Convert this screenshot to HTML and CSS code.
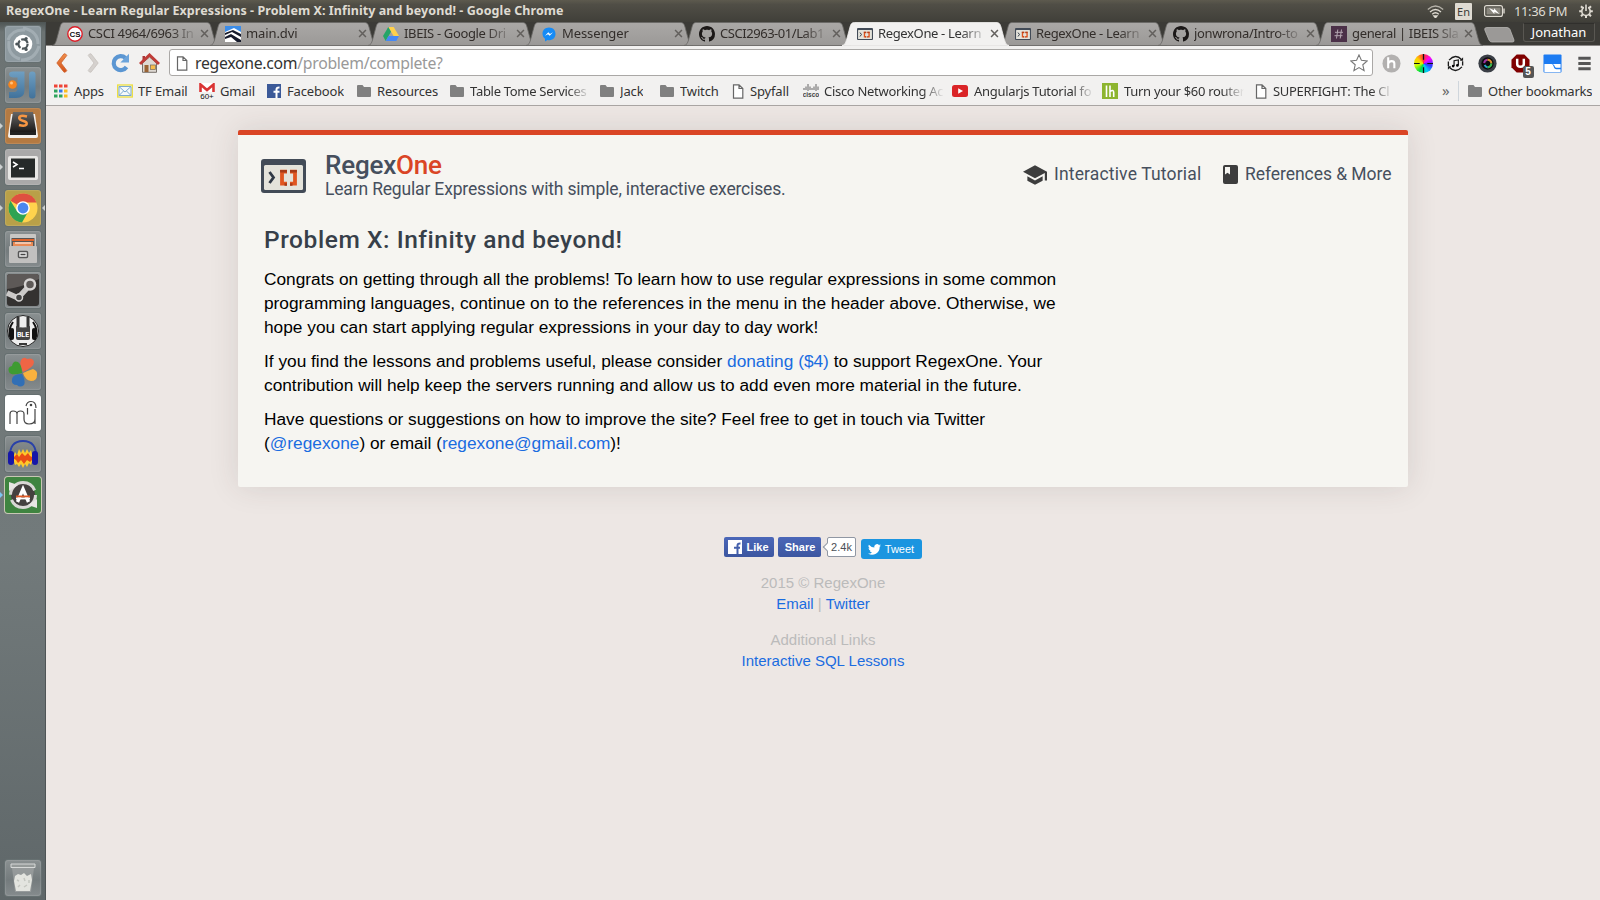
FILE: index.html
```html
<!DOCTYPE html>
<html lang="en">
<head>
<meta charset="utf-8">
<title>RegexOne - Learn Regular Expressions - Problem X: Infinity and beyond!</title>
<link rel="stylesheet" href="styles.css">
</head>
<body>
<svg class="defs" width="0" height="0">
  <defs>
    <linearGradient id="tabg" x1="0" y1="0" x2="0" y2="1"><stop offset="0" stop-color="#aaa8a6"/><stop offset="1" stop-color="#9b9997"/></linearGradient>
    <linearGradient id="orange" x1="0" y1="0" x2="0" y2="1"><stop offset="0" stop-color="#f0904c"/><stop offset="1" stop-color="#d2521a"/></linearGradient>
    <linearGradient id="dark" x1="0" y1="0" x2="0" y2="1"><stop offset="0" stop-color="#666"/><stop offset="1" stop-color="#1c1a19"/></linearGradient>
    <linearGradient id="blue" x1="0" y1="0" x2="0" y2="1"><stop offset="0" stop-color="#6f9fc2"/><stop offset="1" stop-color="#41729b"/></linearGradient>
  </defs>
  <symbol id="tabshape" viewBox="0 0 167 24"><path d="M0 23.5C3 23 3.500 21 4.500 18L8 5C9 1.500 10 .5 12.500 .5H154C157 .5 158 1.500 159 5L162.500 18C163.500 21 164 23 167 23.500Z"/></symbol>
  <symbol id="x" viewBox="0 0 10 10"><path d="M1.200 1.200L8.800 8.800M8.800 1.200L1.200 8.800" stroke="currentColor" stroke-width="1.700"/></symbol>
  <symbol id="folder" viewBox="0 0 14 13"><path d="M0 1.500Q0 .5 1 .5H5.500L7 2.500H13Q14 2.500 14 3.500V11.500Q14 12.500 13 12.500H1Q0 12.500 0 11.500Z" fill="#808080"/></symbol>
  <symbol id="page" viewBox="0 0 12 15"><path d="M1.500 .8H7L10.800 4.500V14.200H1.500ZM7 .8V4.500H10.800" fill="#fff" stroke="#666" stroke-width="1.200"/></symbol>
  <symbol id="github" viewBox="0 0 16 16"><path fill="#1b1817" d="M8 0C3.580 0 0 3.580 0 8c0 3.540 2.290 6.530 5.470 7.590.4.070.55-.17.55-.38 0-.19-.01-.82-.01-1.490-2.010.37-2.530-.49-2.690-.94-.09-.23-.48-.94-.82-1.130-.28-.15-.68-.52-.01-.53.63-.01 1.080.58 1.230.82.72 1.210 1.870.87 2.330.66.07-.52.28-.87.51-1.070-1.780-.2-3.640-.89-3.640-3.950 0-.87.31-1.590.82-2.150-.08-.2-.36-1.020.08-2.120 0 0 .67-.21 2.200.82.640-.18 1.320-.27 2-.27s1.360.09 2 .27c1.530-1.040 2.200-.82 2.200-.82.44 1.100.16 1.920.08 2.120.51.56.82 1.270.82 2.150 0 3.070-1.870 3.750-3.650 3.950.29.25.54.73.54 1.480 0 1.070-.01 1.930-.01 2.200 0 .21.15.46.55.38A8.010 8.010 0 0 0 16 8c0-4.420-3.580-8-8-8"/></symbol>
  <symbol id="rx" viewBox="0 0 45 34"><rect width="45" height="34" rx="3" fill="#424b57"/><rect x="3" y="6" width="39" height="25" rx="1.500" fill="#e4e3db"/><path d="M8.500 13L12.500 18.500L8.500 24" fill="none" stroke="#2f3845" stroke-width="2.800"/><path d="M26 12.700H21V24.700H26M29 12.700H34V24.700H29" fill="none" stroke="#e0551f" stroke-width="3.800"/><path d="M19.100 12.200H26M29 12.200H35.900M23.500 25.500H26M29 25.500H31.500" stroke="#a63a17" stroke-width="2.600"/></symbol>
</svg>

<header class="panel">
  <span class="panel-title">RegexOne - Learn Regular Expressions - Problem X: Infinity and beyond! - Google Chrome</span>
  <div class="indicators">
    <svg class="wifi" width="17" height="13" viewBox="0 0 17 13" fill="none" stroke="#dfdbd2" stroke-width="1.300"><path d="M.8 4.500Q8.500-2.500 16.200 4.500" opacity=".7"/><path d="M3 7Q8.500 2 14 7M5.200 9.300Q8.500 6.300 11.800 9.300"/><path d="M7 11L8.500 12.800L10 11Z" fill="#dfdbd2"/></svg>
    <span class="lang">En</span>
    <svg class="battery" width="21" height="12" viewBox="0 0 21 12"><rect x=".6" y=".6" width="17.800" height="10.800" rx="2" fill="none" stroke="#dfdbd2" stroke-width="1.200"/><rect x="2.500" y="2.500" width="14" height="7" fill="#8a877e"/><path d="M5 3L10 5.200L10 3.200L15.500 9L10.500 7L10.300 9Z" fill="#fff"/><path d="M20 3.500V8.500" stroke="#dfdbd2" stroke-width="1.400"/></svg>
    <span class="clock">11:36 PM</span>
    <svg class="gear" width="14" height="14" viewBox="0 0 14 14" fill="none" stroke="#dfdbd2"><circle cx="7" cy="7.300" r="4.200" stroke-width="1.600"/><path d="M11.200 7.300H13.800M.2 7.300H2.800M7 11.500V14M10 4.300l2-2M4 4.300L2 2.300M10 10.300l2 2M4 10.300L2 12.300" stroke-width="2"/><path d="M7 0V6.500" stroke="#484640" stroke-width="4"/><path d="M7 .5V7" stroke-width="1.600"/></svg>
  </div>
</header>

<div class="desktop">
  <nav class="launcher">
    <div class="tile dash"><svg viewBox="0 0 36 36"><path d="M18 2Q33 5 33 18M34 20Q30 34 16 34M3 14Q7 3 20 4M15 33Q2 29 4 15" fill="none" stroke="#b5bdc2" stroke-width="3" opacity=".55"/><circle cx="18" cy="18" r="9.300" fill="#fff"/><circle cx="18" cy="18" r="4.600" fill="none" stroke="#4d565a" stroke-width="2.200" stroke-dasharray="8.200 1.430"/><circle cx="11.800" cy="18" r="1.600" fill="#4d565a"/><circle cx="21.100" cy="12.600" r="1.600" fill="#4d565a"/><circle cx="21.100" cy="23.400" r="1.600" fill="#4d565a"/></svg></div>
    <div class="tile"><svg viewBox="0 0 36 36"><path d="M8 4.500H19.500V23Q19.500 31 11 31H4V25H9Q12.500 25 12.500 21V10.500H8Q4 10 4 7Q4 4.500 8 4.500Z" fill="url(#blue)"/><rect x="24" y="4.500" width="6.500" height="27" rx="3" fill="url(#blue)"/><circle cx="7.500" cy="17.500" r="4.300" fill="#f5851f"/><circle cx="6.500" cy="16" r="1.500" fill="#ffc27d"/></svg></div>
    <div class="tile sublime running"><svg viewBox="0 0 36 36"><path d="M6 6H30L33 28Q33 30 31 30H5Q3 30 3 28Z" fill="#f3f0ed"/><path d="M5 22H31V27H5Z" fill="#222"/><path d="M8 4H28L31 22Q31 24 28 24H8Q5 24 5 22Z" fill="url(#dark)"/><path d="M22 8.500Q14 6.500 14.300 10.300Q14.800 12.300 18.500 13Q22.500 14 21.500 16.500Q20 18.700 14 17" stroke="#f79643" stroke-width="2.600" fill="none"/></svg></div>
    <div class="tile term running"><svg viewBox="0 0 36 36"><rect x="3" y="7" width="30" height="24" rx="2" fill="#e8e7e5"/><rect x="6" y="9.500" width="24" height="19" fill="#262a29"/><path d="M8 13l4 2.500-4 2.500" fill="none" stroke="#fff" stroke-width="1.500"/><path d="M14 19.500h5" stroke="#fff" stroke-width="1.500"/></svg></div>
    <div class="tile chrome running focused"><svg viewBox="0 0 36 36"><circle cx="18" cy="18" r="14.500" fill="#ffd34d"/><path d="M18 18L5.450 10.750A14.500 14.500 0 0 1 31.500 12.500H18Z" fill="#df5040"/><path d="M5.450 10.750A14.500 14.500 0 0 0 17 32.450L23.500 21L12.500 22Z" fill="#2ea352"/><circle cx="18" cy="18" r="6.800" fill="#fff"/><circle cx="18" cy="18" r="5.400" fill="#4a87ee"/></svg></div>
    <div class="tile"><svg viewBox="0 0 36 36"><path d="M5 4Q5 3 6 3H30Q31 3 31 4V16H5Z" fill="#c8c7c4"/><rect x="6.500" y="7" width="23" height="10" fill="#555"/><rect x="7" y="8" width="22" height="2" fill="#df6229"/><rect x="8" y="11" width="20" height="4" fill="#e98a55"/><path d="M10 12H26" stroke="#fff" stroke-width="1"/><rect x="4" y="15" width="28" height="17" rx="1" fill="#c1c0bf"/><rect x="13.500" y="20.500" width="9" height="6" rx="1" fill="#eee" stroke="#555" stroke-width="1.500"/><path d="M15.500 23.500h5" stroke="#444" stroke-width="1.500"/></svg></div>
    <div class="tile"><svg viewBox="0 0 36 36"><rect x="2" y="2" width="32" height="32" rx="3" fill="#343231"/><path d="M2 17Q18 15 34 7V5Q34 2 31 2H5Q2 2 2 5Z" fill="#5d5957"/><path d="M2 21L13 26L24 14" stroke="#cbc9c8" stroke-width="5.500" fill="none"/><circle cx="25" cy="12.500" r="5" fill="#5d5957" stroke="#d6d4d3" stroke-width="2.500"/><circle cx="14" cy="25.500" r="3.500" fill="#444" stroke="#d6d4d3" stroke-width="1.500"/></svg></div>
    <div class="tile"><svg viewBox="0 0 36 36"><circle cx="18" cy="18" r="15.500" fill="#eee" stroke="#252525" stroke-width="1"/><path d="M6 27Q2 17 8 9M30 27Q34 17 28 9" stroke="#111" stroke-width="2" fill="none"/><rect x="5" y="15" width="4" height="12" rx="2" fill="#111"/><rect x="27" y="15" width="4" height="12" rx="2" fill="#111"/><path d="M13 4V14M23 4V14" stroke="#333" stroke-width="3"/><path d="M11 13Q18 16 25 13V25Q25 27 23 27H13Q11 27 11 25Z" fill="#444"/><text x="18" y="23.500" text-anchor="middle" class="ble">BLE</text><path d="M14 31H22" stroke="#222" stroke-width="1.800"/></svg></div>
    <div class="tile"><svg viewBox="0 0 36 36"><path d="M18 18Q14 11 16 6Q19 2 22 5Q28 3 29 8Q29 13 18 18Z" fill="#ef6545"/><path d="M17 19Q6 22 4 18Q2 13 7 12Q8 6 13 8Q17 11 17 19Z" fill="#3e9b32"/><path d="M18 19Q22 17 28 15Q33 17 32 21Q32 27 26 27Q20 26 18 19Z" fill="#f9b13e"/><path d="M17 20Q21 27 19 31Q15 34 12 31Q6 31 7 25Q8 20 17 20Z" fill="#316fb5"/></svg></div>
    <div class="tile mu"><svg viewBox="0 0 36 36" fill="none" stroke="#444" stroke-width="1.200"><path d="M5 29V19Q5 16 8 16Q12 16 12 19V29M12 19Q12 16 15.500 16Q19 16 19 19V24Q19 29 24 29Q30 29 30 24V14M22.500 13V19.500M30 19V29"/><path d="M21 11Q22 6.500 26 6.500Q31 6.500 31 13"/><circle cx="26" cy="10" r=".7" fill="#444"/></svg></div>
    <div class="tile"><svg viewBox="0 0 36 36"><path d="M5 22Q4 5 18 5Q32 5 31 22" stroke="#2941a8" stroke-width="2" fill="none"/><path d="M8 22L10 16L12 19L14 13L16 17L18 13L20 17L22 13L24 17L26 14L28 22L26 29L24 27L22 31L20 28L18 32L16 28L14 31L12 28L10 29Z" fill="#ffc92b"/><path d="M8 22L12 18L14 21L17 17L20 20L23 17L25 20L29 22L25 26L22 24L19 28L16 24L13 27L11 24Z" fill="#e94c16"/><rect x="3" y="15" width="6" height="14" rx="3" fill="#1717a8"/><rect x="27" y="15" width="6" height="14" rx="3" fill="#1717a8"/></svg></div>
    <div class="tile update running-blue"><svg viewBox="0 0 36 36"><circle cx="18" cy="18" r="12" fill="#44413f"/><circle cx="18" cy="18" r="12.500" fill="none" stroke="#d9d8d5" stroke-width="3" stroke-dasharray="34 5.270"/><path d="M4 14V5L13 8ZM32 22V31L23 28Z" fill="#e7e6e3"/><path d="M12.500 25L18 12L23.500 25" fill="none" stroke="#fff" stroke-width="3.400"/><path d="M11 19.500H25" stroke="#df5b27" stroke-width="2"/><path d="M11 21.500H25" stroke="#fff" stroke-width="1.800"/></svg></div>
    <div class="tile trash"><svg viewBox="0 0 36 36"><path d="M7 8L10 32H26L29 8Z" fill="#adb0af" opacity=".5"/><path d="M10 16L13 14L16 15L19 13L22 16L26 14L27 20L25 31H11L9 21Z" fill="#e3e4df"/><path d="M12 20L14 21M19 18L20 21M24 20V23M13 27L15 25M19 27L22 25" stroke="#c4c6c0" stroke-width="1.500" fill="none"/><path d="M6 4H30V7.500H6Z" fill="#969b9a" stroke="#d6d8d7"/></svg></div>
  </nav>

  <main class="browser">
    <div class="tabstrip">
      <div class="tabs">
        <div class="tab"><svg class="shape"><use href="#tabshape"/></svg><svg class="fav" viewBox="0 0 16 16"><circle cx="8" cy="8" r="7.200" fill="#fff" stroke="#dc1e28" stroke-width="1.400"/><text x="8" y="11" text-anchor="middle" class="cs">CS</text></svg><span class="tab-text">CSCI 4964/6963 In</span><svg class="close"><use href="#x"/></svg></div>
        <div class="tab"><svg class="shape"><use href="#tabshape"/></svg><svg class="fav" viewBox="0 0 16 16"><path d="M0 0H16V16H0Z" fill="#fff"/><path d="M0 0H16V6L9 2L0 6Z" fill="#3c8de8"/><path d="M0 7L8 4L16 8V11L7 6L0 9ZM0 11L6 8L16 14V16H12L6 11L0 13Z" fill="#161a2b"/></svg><span class="tab-text short">main.dvi</span><svg class="close"><use href="#x"/></svg></div>
        <div class="tab"><svg class="shape"><use href="#tabshape"/></svg><svg class="fav" viewBox="0 0 16 16"><path d="M5.300 1H10.700L16 10H10.600Z" fill="#ffd04b"/><path d="M5.300 1L8 5.700L2.700 15L0 10Z" fill="#23a567"/><path d="M5.500 10H16L13.300 15H2.700Z" fill="#4688f4"/></svg><span class="tab-text">IBEIS - Google Dri</span><svg class="close"><use href="#x"/></svg></div>
        <div class="tab"><svg class="shape"><use href="#tabshape"/></svg><svg class="fav" viewBox="0 0 16 16"><path d="M8 1.500C4 1.500 1.500 4.300 1.500 7.800C1.500 10 2.500 11.700 4 12.800V15.500L6.500 14C12 15 14.500 11.500 14.500 7.800C14.500 4.300 12 1.500 8 1.500Z" fill="#168bf5"/><path d="M4 9.800L7.300 6.300L9 8L12 6.300L8.700 9.800L7 8.200Z" fill="#fff"/></svg><span class="tab-text short">Messenger</span><svg class="close"><use href="#x"/></svg></div>
        <div class="tab"><svg class="shape"><use href="#tabshape"/></svg><svg class="fav"><use href="#github"/></svg><span class="tab-text tight">CSCI2963-01/Lab1</span><svg class="close"><use href="#x"/></svg></div>
        <div class="tab active"><svg class="shape"><use href="#tabshape"/></svg><svg class="fav"><use href="#rx"/></svg><span class="tab-text">RegexOne - Learn</span><svg class="close"><use href="#x"/></svg></div>
        <div class="tab"><svg class="shape"><use href="#tabshape"/></svg><svg class="fav"><use href="#rx"/></svg><span class="tab-text">RegexOne - Learn</span><svg class="close"><use href="#x"/></svg></div>
        <div class="tab"><svg class="shape"><use href="#tabshape"/></svg><svg class="fav"><use href="#github"/></svg><span class="tab-text">jonwrona/Intro-to</span><svg class="close"><use href="#x"/></svg></div>
        <div class="tab"><svg class="shape"><use href="#tabshape"/></svg><svg class="fav" viewBox="0 0 16 16"><rect width="16" height="16" fill="#4b3048"/><path d="M6.800 3.500L5.500 12.500M10.500 3.500L9.200 12.500M4 6.300H12M3.500 9.700H11.500" stroke="#b3a6b1" stroke-width="1"/></svg><span class="tab-text">general | IBEIS Sla</span><svg class="close"><use href="#x"/></svg></div>
      </div>
      <svg class="newtab" width="31" height="16" viewBox="0 0 31 16"><path d="M3 .5H23Q25 .5 26 2.500L30 13Q30.500 15 28.500 15H8Q6 15 5 13L.8 3Q0 .5 3 .5Z" fill="#9b9997" stroke="#c0bebb" stroke-width=".7"/></svg>
      <div class="user">Jonathan</div>
    </div>

    <div class="toolbar">
      <div class="navicons">
        <svg width="12" height="20" viewBox="0 0 12 20"><path d="M8 .8Q10 .5 10.800 2.500L5 10L10.800 17.500Q10 19.500 8 19.200L.8 10Z" fill="url(#orange)" stroke="#cf622d" stroke-width=".8"/></svg>
        <svg class="fwd" width="12" height="20" viewBox="0 0 12 20"><path d="M4 .8Q2 .5 1.200 2.500L7 10L1.200 17.500Q2 19.500 4 19.200L11.200 10Z" fill="#d5d1ce" stroke="#c6c1bd" stroke-width=".8"/></svg>
        <svg class="reload" width="19" height="20" viewBox="0 0 19 20"><path d="M15.500 14A7 7 0 1 1 14.500 5" fill="none" stroke="#5b96d2" stroke-width="4.200"/><path d="M18 .8V9.500H9.300Z" fill="#6ba3da"/></svg>
        <svg class="home" width="21" height="20" viewBox="0 0 21 20"><path d="M3.500 10L10.500 4L17.500 10V19.300H3.500Z" fill="#ded9d3" stroke="#77716b"/><path d="M3.500 3H6V8L3.500 9Z" fill="#a93737"/><path d="M1 11L10.500 2L20 11" fill="none" stroke="#bf3c38" stroke-width="3"/><rect x="5.500" y="12" width="4" height="7" fill="#9a6435"/><rect x="11.500" y="12" width="5" height="4.500" fill="#f7bd4c" stroke="#756a5b" stroke-width=".7"/></svg>
      </div>
      <div class="omnibox">
        <svg width="12" height="15"><use href="#page"/></svg>
        <span class="url">regexone.com<span class="path">/problem/complete?</span></span>
        <svg class="star" width="18" height="18" viewBox="0 0 18 18"><path d="M9 .9L11.400 6.300L17.200 6.900L12.800 10.800L14.100 16.600L9 13.600L3.900 16.600L5.200 10.800L.8 6.900L6.600 6.300Z" fill="#fff" stroke="#777" stroke-width="1.100"/></svg>
      </div>
      <div class="extensions">
        <svg viewBox="0 0 20 20"><circle cx="10" cy="10" r="9.500" fill="#b2b0af"/><path d="M6.500 3.500V15M6.500 10Q7.500 7.500 10 7.500Q13 7.500 13 10V15" stroke="#fff" stroke-width="2.200" fill="none"/></svg>
        <div class="wheel"><svg viewBox="0 0 20 20"><path d="M10 0V6M10 14V20M0 10H6M14 10H20" stroke="#111" stroke-width="1.300"/></svg></div>
        <svg viewBox="0 0 20 20"><path d="M3.200 6.500Q10-1 16.500 6M3.500 14Q10 21 16.800 13.500M2.500 12.500V8M17.500 7.500V12" fill="none" stroke="#1c1c1c" stroke-width="1.400"/><path d="M14.500 7H18V3.500ZM5.500 13H2V16.500Z" fill="#1c1c1c"/><path d="M8.500 12.500V7L13 6.200V11.800" fill="none" stroke="#1c1c1c" stroke-width="1.300"/><circle cx="7.500" cy="12.700" r="1.400"/><circle cx="12" cy="12" r="1.400"/></svg>
        <svg viewBox="0 0 20 20"><circle cx="10" cy="10" r="9.600" fill="#3a3e45"/><circle cx="10" cy="10" r="6.500" fill="#0b0b0d"/><path d="M6.500 9.500A4 4 0 0 1 10 6" stroke="#a233a3" stroke-width="2" fill="none"/><path d="M10 6A4 4 0 0 1 14 10" stroke="#d98f33" stroke-width="2.200" fill="none"/><path d="M14 10A4 4 0 0 1 10 14" stroke="#3ab550" stroke-width="2.400" fill="none"/><path d="M10 14A4 4 0 0 1 7 11.500" stroke="#22a5cb" stroke-width="2" fill="none"/></svg>
        <div class="ublock"><svg viewBox="0 0 20 20"><path d="M6 .5H14L19.500 6V14L14 19.500H6L.5 14V6Z" fill="#800000"/><path d="M6.500 5V10.500Q6.500 13.500 10 13.500Q13.500 13.500 13.500 10.500V5" fill="none" stroke="#fff" stroke-width="2.600"/></svg><span class="count">5</span></div>
        <svg viewBox="0 0 20 20"><rect x=".5" y=".5" width="19" height="19" rx="1" fill="#1d7cf2"/><path d="M1.500 10.500H9Q10.500 10.500 11 12.500Q12 16 14 16H18.500V19H1.500Z" fill="#fff"/><path d="M10.500 10.500H18.500V14.500H14Q12.500 14.500 12 12Z" fill="#fff"/></svg>
        <svg viewBox="0 0 20 20"><path d="M3.500 4.500H16.500M3.500 10H16.500M3.500 15.500H16.500" stroke="#555" stroke-width="3"/></svg>
      </div>
    </div>

    <div class="bookmarks">
      <a class="bm apps"><svg viewBox="0 0 14 14"><path d="M0 2H3.500M5 2H8.500M10 2H13.500" stroke="#ee4537" stroke-width="3"/><path d="M0 7H3.500" stroke="#2fa45d" stroke-width="3"/><path d="M5 7H8.500" stroke="#3476e6" stroke-width="3"/><path d="M10 7H13.500M10 12H13.500" stroke="#fbbd20" stroke-width="3"/><path d="M0 12H3.500M5 12H8.500" stroke="#2fa45d" stroke-width="3"/></svg><span>Apps</span></a>
      <a class="bm tf"><svg viewBox="0 0 16 14"><rect x=".7" y="1" width="14.600" height="12" fill="#f4f9fb" stroke="#ecdd3d" stroke-width="1.300"/><path d="M2 2.500L8 8L14 2.500M2 11.500L6.500 7M14 11.500L9.500 7M2 2.500H14V11.500H2Z" fill="none" stroke="#7caad0"/></svg><span>TF Email</span></a>
      <a class="bm gmail"><svg viewBox="0 0 16 16"><rect width="16" height="9" fill="#fff"/><path d="M1.500 9V1.500L8 7L14.500 1.500V9" fill="none" stroke="#da3434" stroke-width="2.600"/><text x="8" y="15.500" text-anchor="middle" class="sixty">60+</text></svg><span>Gmail</span></a>
      <a class="bm fb"><svg viewBox="0 0 14 14"><rect width="14" height="14" fill="#3b5998"/><path d="M9.500 14V5.500Q9.500 3.300 12.500 3.500M6.500 7.700H12.500" stroke="#fff" stroke-width="2" fill="none"/></svg><span>Facebook</span></a>
      <a class="bm res"><svg><use href="#folder"/></svg><span>Resources</span></a>
      <a class="bm ttome fade"><svg><use href="#folder"/></svg><span>Table Tome Services</span></a>
      <a class="bm jack"><svg><use href="#folder"/></svg><span>Jack</span></a>
      <a class="bm twitch"><svg><use href="#folder"/></svg><span>Twitch</span></a>
      <a class="bm spy"><svg><use href="#page"/></svg><span>Spyfall</span></a>
      <a class="bm cisco fade"><svg viewBox="0 0 16 14"><path d="M1 4V6M3 2.500V6M5 0V7M7 2.500V6M9 4V6M11 2.500V6M13 0V7M15 2.500V6" stroke="#555" stroke-width=".9"/><text x="8" y="13" text-anchor="middle" class="ciscotext">cisco</text></svg><span>Cisco Networking Ac</span></a>
      <a class="bm yt fade"><svg viewBox="0 0 16 12"><rect width="16" height="12" rx="2.500" fill="#da2427"/><path d="M6.200 3.300V8.700L11 6Z" fill="#fff"/></svg><span>Angularjs Tutorial fo</span></a>
      <a class="bm lh fade"><svg viewBox="0 0 16 16"><rect width="16" height="16" fill="#8db52f"/><path d="M4.500 2.500V14M8 2.500V14M8 8.500Q11.700 6 11.700 9.500V14" fill="none" stroke="#fff" stroke-width="1.600"/></svg><span>Turn your $60 router</span></a>
      <a class="bm super fade"><svg><use href="#page"/></svg><span>SUPERFIGHT: The Cl</span></a>
      <span class="more">»</span>
      <a class="bm other"><svg><use href="#folder"/></svg><span>Other bookmarks</span></a>
    </div>

    <div class="viewport">
      <section class="card">
        <div class="site-head">
          <svg class="logo" width="45" height="34"><use href="#rx"/></svg>
          <div class="brand">
            <div class="brand-name">Regex<b>One</b></div>
            <div class="tagline">Learn Regular Expressions with simple, interactive exercises.</div>
          </div>
          <div class="menu">
            <svg width="24" height="20" viewBox="1 3 22 18"><path d="M5 13.180v4L12 21l7-3.820v-4L12 17l-7-3.820zM12 3L1 9l11 6 9-4.910V17h2V9L12 3z" fill="#3d3d3d"/></svg>
            <span class="tutorial">Interactive Tutorial</span>
            <svg class="book" width="15" height="19" viewBox="0 0 15 19"><rect width="15" height="19" rx="2" fill="#3d3d3d"/><path d="M2 2H7V9.500L4.500 7.800L2 9.500Z" fill="#f6f5f1"/></svg>
            <span>References &amp; More</span>
          </div>
        </div>
        <h1>Problem X: Infinity and beyond!</h1>
        <p>Congrats on getting through all the problems! To learn how to use regular expressions in some common<br>programming languages, continue on to the references in the menu in the header above. Otherwise, we<br>hope you can start applying regular expressions in your day to day work!</p>
        <p>If you find the lessons and problems useful, please consider <a>donating ($4)</a> to support RegexOne. Your<br>contribution will help keep the servers running and allow us to add even more material in the future.</p>
        <p>Have questions or suggestions on how to improve the site? Feel free to get in touch via Twitter<br>(<a>@regexone</a>) or email (<a>regexone@gmail.com</a>)!</p>
      </section>
      <footer>
        <div class="social">
          <span class="fbbtn like"><svg width="14" height="14" viewBox="0 0 14 14"><rect width="14" height="14" fill="#fff"/><path d="M9.500 14V5.500Q9.500 3.300 12.500 3.500M6 7.700H12" stroke="#4460ac" stroke-width="2" fill="none"/></svg>Like</span>
          <span class="fbbtn share">Share</span>
          <span class="bubble">2.4k</span>
          <span class="tweet"><svg width="13" height="11" viewBox="0 0 24 20"><path d="M24 2.400a10 10 0 0 1-2.800.8A5 5 0 0 0 23.300.5a10 10 0 0 1-3.100 1.200A4.900 4.900 0 0 0 11.800 6.200 14 14 0 0 1 1.700 1a4.900 4.900 0 0 0 1.500 6.600A5 5 0 0 1 1 7a4.900 4.900 0 0 0 3.900 4.900 5 5 0 0 1-2.200.1 4.900 4.900 0 0 0 4.600 3.400A10 10 0 0 1 0 17.500 14 14 0 0 0 21.500 5 10 10 0 0 0 24 2.400Z" fill="#fff"/></svg>Tweet</span>
        </div>
        <div class="foot">2015 © RegexOne<br><a>Email</a> | <a>Twitter</a></div>
        <div class="foot">Additional Links<br><a>Interactive SQL Lessons</a></div>
      </footer>
    </div>
  </main>
</div>
</body>
</html>
```
FILE: styles.css
```css
* { box-sizing: border-box; }
body { margin: 0; width: 1600px; height: 900px; overflow: hidden; display: flex; flex-direction: column; font-family: "Noto Sans", "Open Sans", sans-serif; font-size: 13px; background: #ede7e4; }
svg { display: block; flex: none; }
.defs { position: absolute; }

.panel { height: 22px; flex: none; display: flex; justify-content: space-between; align-items: center; padding: 0 7px 0 6px; background: linear-gradient(#5d5a4e, #504e46 20%, #403f39); color: #dfdbd2; white-space: nowrap; }
.panel-title { font-weight: 700; font-size: 12.5px; letter-spacing: .075px; line-height: 20px; }
.indicators { display: flex; align-items: center; height: 22px; }
.lang { width: 17px; height: 17px; margin: 0 12px 0 11px; background: #dfdbd2; color: #3c3b37; font-size: 11px; line-height: 17px; text-align: center; border-radius: 1px; }
.clock { width: 52px; margin: 0 13px 0 9px; font-size: 13px; letter-spacing: -.4px; line-height: 20px; padding-bottom: 1px; }

.desktop { flex: 1; display: flex; min-height: 0; }
.launcher { width: 46px; flex: none; padding: 4px 0 4px 5px; display: flex; flex-direction: column; gap: 5px; background: linear-gradient(#4e5554, #6c7373 10px, #727a7b 60%, #5f6769); border-right: 1px solid #4f5556; }
.tile { position: relative; width: 36px; height: 36px; flex: none; border-radius: 3px; background: linear-gradient(#8a9091, #747b7d 55%, #858b8d); box-shadow: 0 0 0 1px #667071, inset 0 0 1px 1px rgba(255,255,255,.12); }
.tile svg { width: 36px; height: 36px; }
.dash { background: #8d999f; }
.sublime { background: #b47a42; }
.term { background: #aaa9a9; }
.chrome { background: #b9a048; }
.mu { background: #fff; }
.update { background: #3f8440; box-shadow: 0 0 0 1px #c8c7b4; }
.trash { margin-top: auto; }
.running::before, .running-blue::before { content: ""; position: absolute; left: -5px; top: 15px; border: 3px solid transparent; border-left-color: #ccd0d0; }
.running-blue::before { border-left-color: #7cc6f0; }
.focused::after { content: ""; position: absolute; right: -4px; top: 15px; border: 3px solid transparent; border-right-color: #ccd0d0; border-left: 0; }
.ble { font: 700 7px Roboto, sans-serif; fill: #fff; }

.browser { flex: 1; display: flex; flex-direction: column; min-width: 0; }
.tabstrip { height: 24px; flex: none; display: flex; align-items: flex-start; padding-left: 6px; background: #3c3b37; border-bottom: 1px solid #8a8785; }
.tabs { display: flex; height: 24px; }
.tab { position: relative; width: 167px; height: 24px; margin-right: -9px; padding: 0 6px 1px 15px; display: flex; align-items: center; color: #322d2a; }
.shape { position: absolute; left: 0; top: 0; width: 167px; height: 24px; fill: url(#tabg); stroke: #6a6866; stroke-width: .8; }
.active { z-index: 1; color: #333; }
.active .shape { fill: #f2f1f0; stroke: #f2f1f0; }
.fav { position: relative; width: 16px; height: 16px; margin-right: 5px; }
.tab-text { position: relative; width: 106px; overflow: hidden; white-space: nowrap; line-height: 20px; padding-bottom: 1px; letter-spacing: -.35px; -webkit-mask-image: linear-gradient(90deg, #000 78%, transparent 104%); mask-image: linear-gradient(90deg, #000 78%, transparent 104%); }
.tab-text.short { letter-spacing: -.1px; }
.tab-text.tight { letter-spacing: -.45px; }
.close { position: relative; width: 9px; height: 9px; margin-left: 6px; color: #63605d; }
.cs { font: 700 8px "Liberation Sans", sans-serif; fill: #111; }
.newtab { margin: 5px 0 0 10px; }
.user { width: 72px; height: 19px; margin: 1px 0 0 8px; border: 1px solid #595752; border-top-color: #302f2c; border-radius: 0 0 3px 3px; color: #fff; line-height: 17px; text-align: center; }

.toolbar { height: 34px; flex: none; display: flex; align-items: center; padding-bottom: 1px; background: #f2f1f0; }
.navicons { width: 123px; display: flex; align-items: center; padding: 1px 0 0 10px; }
.fwd { margin-left: 19px; }
.reload { margin-left: 12px; }
.home { margin-left: 9px; }
.omnibox { width: 1204px; height: 27px; border: 1px solid #aaa8a6; border-radius: 3px; background: #fff; display: flex; align-items: center; padding: 1px 4px 0 6px; }
.url { flex: 1; margin-left: 7px; font-size: 15.8px; line-height: 22px; letter-spacing: -.3px; color: #333; }
.path { color: #999; }
.extensions { flex: 1; display: flex; justify-content: space-between; padding: 1px 6px 0 9px; }
.extensions svg, .wheel { width: 19px; height: 19px; }
.wheel { border-radius: 50%; background: conic-gradient(#f33, #f0f, #33f, #0cf, #0d4, #cf0, #fc0, #f33); }
.ublock { position: relative; }
.count { position: absolute; left: 12px; top: 12px; width: 11px; height: 12px; background: #555; color: #fff; font: 700 10px/12px "Liberation Sans", sans-serif; text-align: center; border-radius: 2px; }

.bookmarks { height: 26px; flex: none; display: flex; align-items: center; padding: 0 0 3px 8px; background: #f2f1f0; border-bottom: 1px solid #aaa6a4; color: #333; white-space: nowrap; }
.bm { display: flex; align-items: center; flex: none; height: 20px; overflow: hidden; }
.bm svg { width: 14px; height: 14px; margin-right: 6px; }
.bm span { line-height: 20px; overflow: hidden; letter-spacing: -.15px; }
.apps { width: 63px; }
.tf { width: 82px; }
.tf svg, .gmail svg, .cisco svg, .yt svg, .lh svg { width: 16px; height: 16px; margin-right: 5px; }
.gmail { width: 68px; }
.fb { width: 90px; }
.res { width: 93px; }
.ttome { width: 150px; }
.jack { width: 60px; }
.twitch { width: 71px; }
.spy { width: 72px; }
.spy svg, .super svg { height: 15px; margin-right: 5px; }
.cisco { width: 149px; }
.yt { width: 150px; }
.yt svg, .lh svg { margin-right: 6px; }
.lh { width: 152px; }
.super { width: 188px; }
.bm.fade span { width: 120px; letter-spacing: -.3px; -webkit-mask-image: linear-gradient(90deg, #000 82%, transparent); mask-image: linear-gradient(90deg, #000 82%, transparent); }
.more { width: 16px; font-size: 15px; color: #666; line-height: 18px; padding-bottom: 2px; }
.other { border-left: 1px solid #cfd6dc; padding-left: 9px; }
.bm.other span { letter-spacing: -.22px; }
.sixty { font: 8px "Liberation Sans", sans-serif; fill: #111; }
.ciscotext { font: 700 6.500px "Liberation Sans", sans-serif; fill: #444; }

.viewport { flex: 1; display: flex; flex-direction: column; align-items: center; padding-top: 24px; background: #ede7e4; font-family: "Liberation Sans", Arial, sans-serif; }
.card { width: 1170px; height: 357px; padding: 0 16px 0 26px; border-top: 5px solid #da4525; border-radius: 2px; background: #f6f5f1; box-shadow: 0 0 30px rgba(60,50,50,.13); font-size: 17.3px; line-height: 24px; }
.site-head { display: flex; margin-left: -3px; height: 84px; }
.logo { margin-top: 24px; }
.brand { margin: 15px 0 0 19px; font-family: Roboto, sans-serif; color: #464f5d; white-space: nowrap; }
.brand-name { font-size: 26px; line-height: 30px; font-weight: 500; letter-spacing: -.2px; }
.brand-name b { color: #da4525; font-weight: 500; }
.tagline { font-size: 17.500px; line-height: 18px; letter-spacing: -.17px; }
.menu { margin-left: auto; display: flex; align-items: center; height: 79px; font: 17.500px/24px Roboto, sans-serif; color: #464f5d; white-space: nowrap; }
.menu span { margin-left: 7px; width: 147px; padding-bottom: 1px; letter-spacing: -.05px; }
.menu .tutorial { letter-spacing: .16px; }
.menu .book { margin-left: 22px; }
h1 { margin: 6px 0 12px; font: 500 24.500px/30px Roboto, sans-serif; letter-spacing: .56px; color: #373f49; }
p { margin: 0 0 10px; color: #000; white-space: nowrap; }
a { color: inherit; }
p a, .foot a { color: #1a6ce0; }

footer { display: flex; flex-direction: column; align-items: center; padding-top: 50px; font-size: 15px; line-height: 21px; color: #bbb; text-align: center; }
.social { display: flex; height: 22px; font-size: 11px; line-height: 20px; margin-bottom: 13px; }
.fbbtn { height: 20px; margin-right: 4px; border-radius: 2px; background: linear-gradient(#4b67b8, #3c56a0); color: #fff; font-weight: 700; display: flex; align-items: center; justify-content: center; gap: 4px; }
.like { width: 50px; padding-right: 1px; }
.share { width: 43px; margin-right: 6px; padding-left: 1px; }
.bubble { position: relative; width: 29px; height: 20px; margin-right: 5px; border: 1px solid #9097a3; border-radius: 2px; background: #fff; color: #4b4f56; line-height: 18px; }
.bubble::before { content: ""; position: absolute; left: -4px; top: 6px; width: 5px; height: 5px; border: solid #9097a3; border-width: 0 0 1px 1px; background: #fff; transform: rotate(45deg); }
.tweet { width: 61px; height: 20px; margin-top: 2px; padding-right: 1px; border-radius: 3px; background: #1b95e0; color: #fff; display: flex; align-items: center; justify-content: center; gap: 4px; }
.foot { margin-bottom: 15px; }
```
